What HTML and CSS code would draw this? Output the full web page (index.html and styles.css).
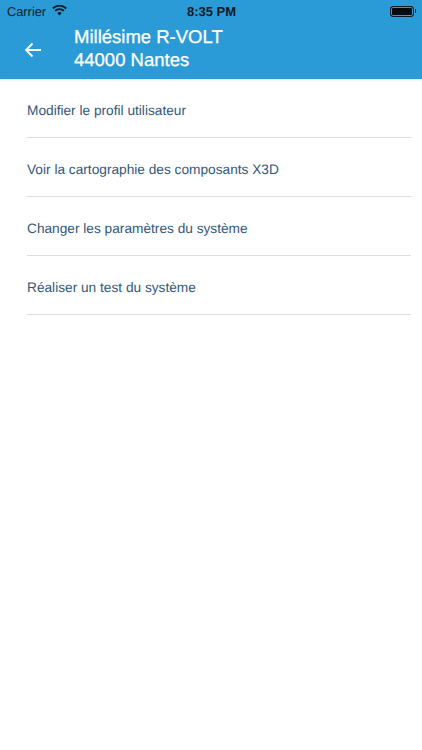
FILE: index.html
```html
<!DOCTYPE html>
<html lang="fr">
<head>
<meta charset="utf-8">
<title>Millésime R-VOLT</title>
<link rel="stylesheet" href="styles.css">
</head>
<body>
<header class="header">
  <div class="status">
    <div class="status-left">
      <span>Carrier</span>
      <svg class="wifi" viewBox="0 0 16 12" width="15" height="11"><path d="M8 11.500 5.600 8.900a3.400 3.400 0 0 1 4.800 0zM3.900 7.200l-1.400-1.500a7.800 7.800 0 0 1 11 0l-1.400 1.500a5.800 5.800 0 0 0-8.200 0zM1.300 4.500 0 3.100a11.300 11.300 0 0 1 16 0l-1.300 1.400a9.400 9.400 0 0 0-13.400 0z" fill="#0a1a26"/></svg>
    </div>
    <span class="time">8:35 PM</span>
    <div class="battery"><span class="battery-level"></span><span class="battery-tip"></span></div>
  </div>
  <div class="nav">
    <svg class="back" viewBox="0 0 18 16" width="18" height="16"><path d="M17 8H2M8.500 1.500 2 8l6.500 6.500" fill="none" stroke="#fff" stroke-width="1.800"/></svg>
    <h1 class="title">Millésime R-VOLT<br>44000 Nantes</h1>
  </div>
</header>
<ul class="menu">
  <li class="item">Modifier le profil utilisateur</li>
  <li class="item">Voir la cartographie des composants X3D</li>
  <li class="item">Changer les paramètres du système</li>
  <li class="item">Réaliser un test du système</li>
</ul>
</body>
</html>
```
FILE: styles.css
```css
* { box-sizing: border-box; }
html, body { margin: 0; padding: 0; background: #fff; }
body { width: 422px; height: 750px; overflow: hidden; font-family: "Liberation Sans", Arial, sans-serif; text-rendering: geometricPrecision; }
.header { height: 79px; background: #2a9bd7; box-shadow: 0 1px 2px rgba(0,0,0,.12); }
.status { height: 22px; display: grid; grid-template-columns: 1fr auto 1fr; align-items: center; padding: 1px 6px 0 7px; font-size: 12.800px; color: #0a1a26; }
.status-left { display: flex; align-items: center; gap: 6px; }
.wifi { margin-top: -2px; }
.time { font-weight: 700; font-size: 13px; }
.battery { justify-self: end; display: flex; align-items: center; margin-top: -1px; }
.battery-level { width: 24px; height: 11px; background: #050a10; border: 1px solid #0a1a26; border-radius: 3px; box-shadow: inset 0 0 0 1px #2a9bd7; }
.battery-tip { width: 1px; height: 4px; background: #0a1a26; margin-left: 1px; }
.nav { display: flex; align-items: center; height: 48px; padding-left: 24px; }
.back { flex: none; margin-top: 8px; }
.title { margin: 3px 0 0 32px; font-size: 18.500px; line-height: 23px; font-weight: 400; color: #fff; font-family: "Liberation Sans", Arial, sans-serif; -webkit-text-stroke: .3px #fff; }
.menu { list-style: none; margin: 0; padding: 0 11px 0 27px; }
.item { height: 59px; line-height: 64px; border-bottom: 1px solid #dcdfe1; font-size: 13.700px; color: #33587a; }
```
